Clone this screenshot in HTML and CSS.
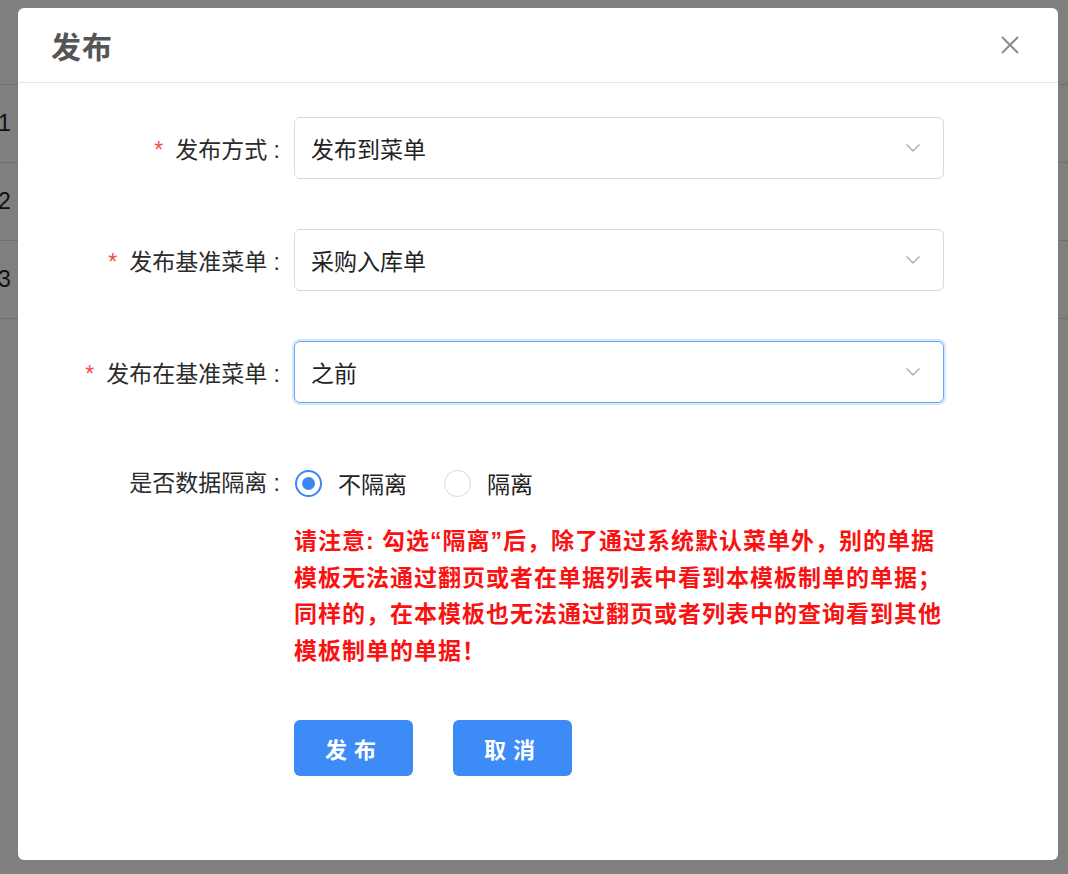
FILE: index.html
```html
<!DOCTYPE html>
<html lang="zh-CN">
<head>
<meta charset="utf-8">
<title>发布</title>
<link rel="stylesheet" href="styles.css">
</head>
<body>
<div class="page">
  <div class="table">
    <div class="trow head"><span class="num"></span></div>
    <div class="trow"><span class="num">1</span></div>
    <div class="trow"><span class="num">2</span></div>
    <div class="trow"><span class="num">3</span></div>
  </div>
</div>
<div class="overlay">
  <div class="dialog">
    <div class="dialog-header">
      <h2 class="dialog-title">发布</h2>
      <button class="close" aria-label="关闭">
        <svg width="20" height="20" viewBox="0 0 20 20"><path d="M2 2 L18 18 M18 2 L2 18" stroke="#8c8c8c" stroke-width="2" fill="none"/></svg>
      </button>
    </div>
    <div class="dialog-body">
      <div class="form-row">
        <label class="form-label"><span class="req">*</span>发布方式 :</label>
        <div class="select">
          <span class="select-value">发布到菜单</span>
          <svg class="arrow" width="16" height="10" viewBox="0 0 16 10"><path d="M1.5 1.5 L8 8 L14.5 1.5" stroke="#b0b0b0" stroke-width="1.5" fill="none"/></svg>
        </div>
      </div>
      <div class="form-row">
        <label class="form-label"><span class="req">*</span>发布基准菜单 :</label>
        <div class="select">
          <span class="select-value">采购入库单</span>
          <svg class="arrow" width="16" height="10" viewBox="0 0 16 10"><path d="M1.5 1.5 L8 8 L14.5 1.5" stroke="#b0b0b0" stroke-width="1.5" fill="none"/></svg>
        </div>
      </div>
      <div class="form-row">
        <label class="form-label"><span class="req">*</span>发布在基准菜单 :</label>
        <div class="select focused">
          <span class="select-value">之前</span>
          <svg class="arrow" width="16" height="10" viewBox="0 0 16 10"><path d="M1.5 1.5 L8 8 L14.5 1.5" stroke="#b0b0b0" stroke-width="1.5" fill="none"/></svg>
        </div>
      </div>
      <div class="form-row radio-row">
        <label class="form-label">是否数据隔离 :</label>
        <div class="field">
          <div class="radios">
            <span class="radio checked"><span class="dot"></span></span><span class="radio-text">不隔离</span>
            <span class="radio"></span><span class="radio-text">隔离</span>
          </div>
          <p class="notice">请注意: 勾选“隔离”后，除了通过系统默认菜单外，别的单据模板无法通过翻页或者在单据列表中看到本模板制单的单据；同样的，在本模板也无法通过翻页或者列表中的查询看到其他模板制单的单据！</p>
          <div class="actions">
            <button class="btn">发布</button>
            <button class="btn">取消</button>
          </div>
        </div>
      </div>
    </div>
  </div>
</div>
</body>
</html>
```
FILE: styles.css
```css
* { box-sizing: border-box; }
html, body { margin: 0; padding: 0; }
body {
  width: 1068px;
  height: 874px;
  overflow: hidden;
  background: #fff;
  font-family: "Liberation Sans", "Noto Sans CJK SC", sans-serif;
  position: relative;
}
.page { padding-top: 8px; }
.table { width: 1068px; }
.trow {
  height: 78px;
  border-bottom: 1px solid #dcdcdc;
  display: flex;
  align-items: center;
}
.trow.head { height: 77px; }
.num {
  margin-left: -2px;
  font-family: "Liberation Sans", Arial, sans-serif;
  font-size: 23px;
  color: #222;
}
.overlay {
  position: absolute;
  inset: 0;
  background: rgba(0, 0, 0, 0.5);
  padding: 8px 10px 14px 18px;
}
.dialog {
  width: 1040px;
  height: 852px;
  background: #fff;
  border-radius: 6px;
  overflow: hidden;
}
.dialog-header {
  height: 75px;
  border-bottom: 1px solid #e6e6e6;
  display: flex;
  align-items: center;
  justify-content: space-between;
  padding: 0 38px 0 33px;
}
.dialog-title {
  margin: 0;
  font-family: "Noto Sans CJK SC", sans-serif;
  font-size: 30px;
  font-weight: 700;
  color: #555;
  letter-spacing: 1px;
}
.close {
  border: 0;
  background: none;
  padding: 0;
  width: 20px;
  height: 20px;
  display: flex;
}
.dialog-body {
  padding-top: 34px;
  display: flex;
  flex-direction: column;
  gap: 50px;
}
.form-row {
  display: flex;
  align-items: center;
}
.form-label {
  width: 262px;
  margin-right: 14px;
  text-align: right;
  font-size: 23px;
  color: #2b2b2b;
  white-space: nowrap;
}
.req {
  color: #f0504a;
  margin-right: 12px;
}
.select {
  width: 650px;
  height: 62px;
  border: 1.5px solid #d9d9d9;
  border-radius: 6px;
  display: flex;
  align-items: center;
  justify-content: space-between;
  padding: 0 22px 0 16px;
}
.select.focused {
  border-color: #6ea5f3;
  box-shadow: 0 0 0 2px #d6e6fc;
}
.select-value {
  font-size: 23px;
  color: #222;
}
.radio-row {
  align-items: flex-start;
  margin-top: 10px;
}
.radio-row .form-label {
  line-height: 40px;
}
.field { width: 650px; }
.radios {
  height: 40px;
  display: flex;
  align-items: center;
}
.radio {
  width: 27px;
  height: 27px;
  border: 1.5px solid #d9d9d9;
  border-radius: 50%;
  display: flex;
  align-items: center;
  justify-content: center;
  margin-left: 1px;
}
.radio.checked { border: 2px solid #3a86f5; }
.dot {
  width: 13px;
  height: 13px;
  border-radius: 50%;
  background: #3a86f5;
}
.radio-text {
  font-size: 23px;
  color: #222;
  margin-left: 16px;
  margin-right: 36px;
}
.notice {
  margin: 20px 0 0;
  font-size: 23px;
  line-height: 36.5px;
  letter-spacing: 1px;
  font-weight: 700;
  color: #fa1212;
}
.actions {
  margin-top: 51px;
  display: flex;
  gap: 40px;
}
.btn {
  width: 119px;
  height: 56px;
  border: 0;
  border-radius: 6px;
  background: #3d8bf7;
  color: #fff;
  font-family: "Noto Sans CJK SC", sans-serif;
  font-size: 22px;
  font-weight: 700;
  letter-spacing: 7px;
  padding-left: 7px;
}
```
